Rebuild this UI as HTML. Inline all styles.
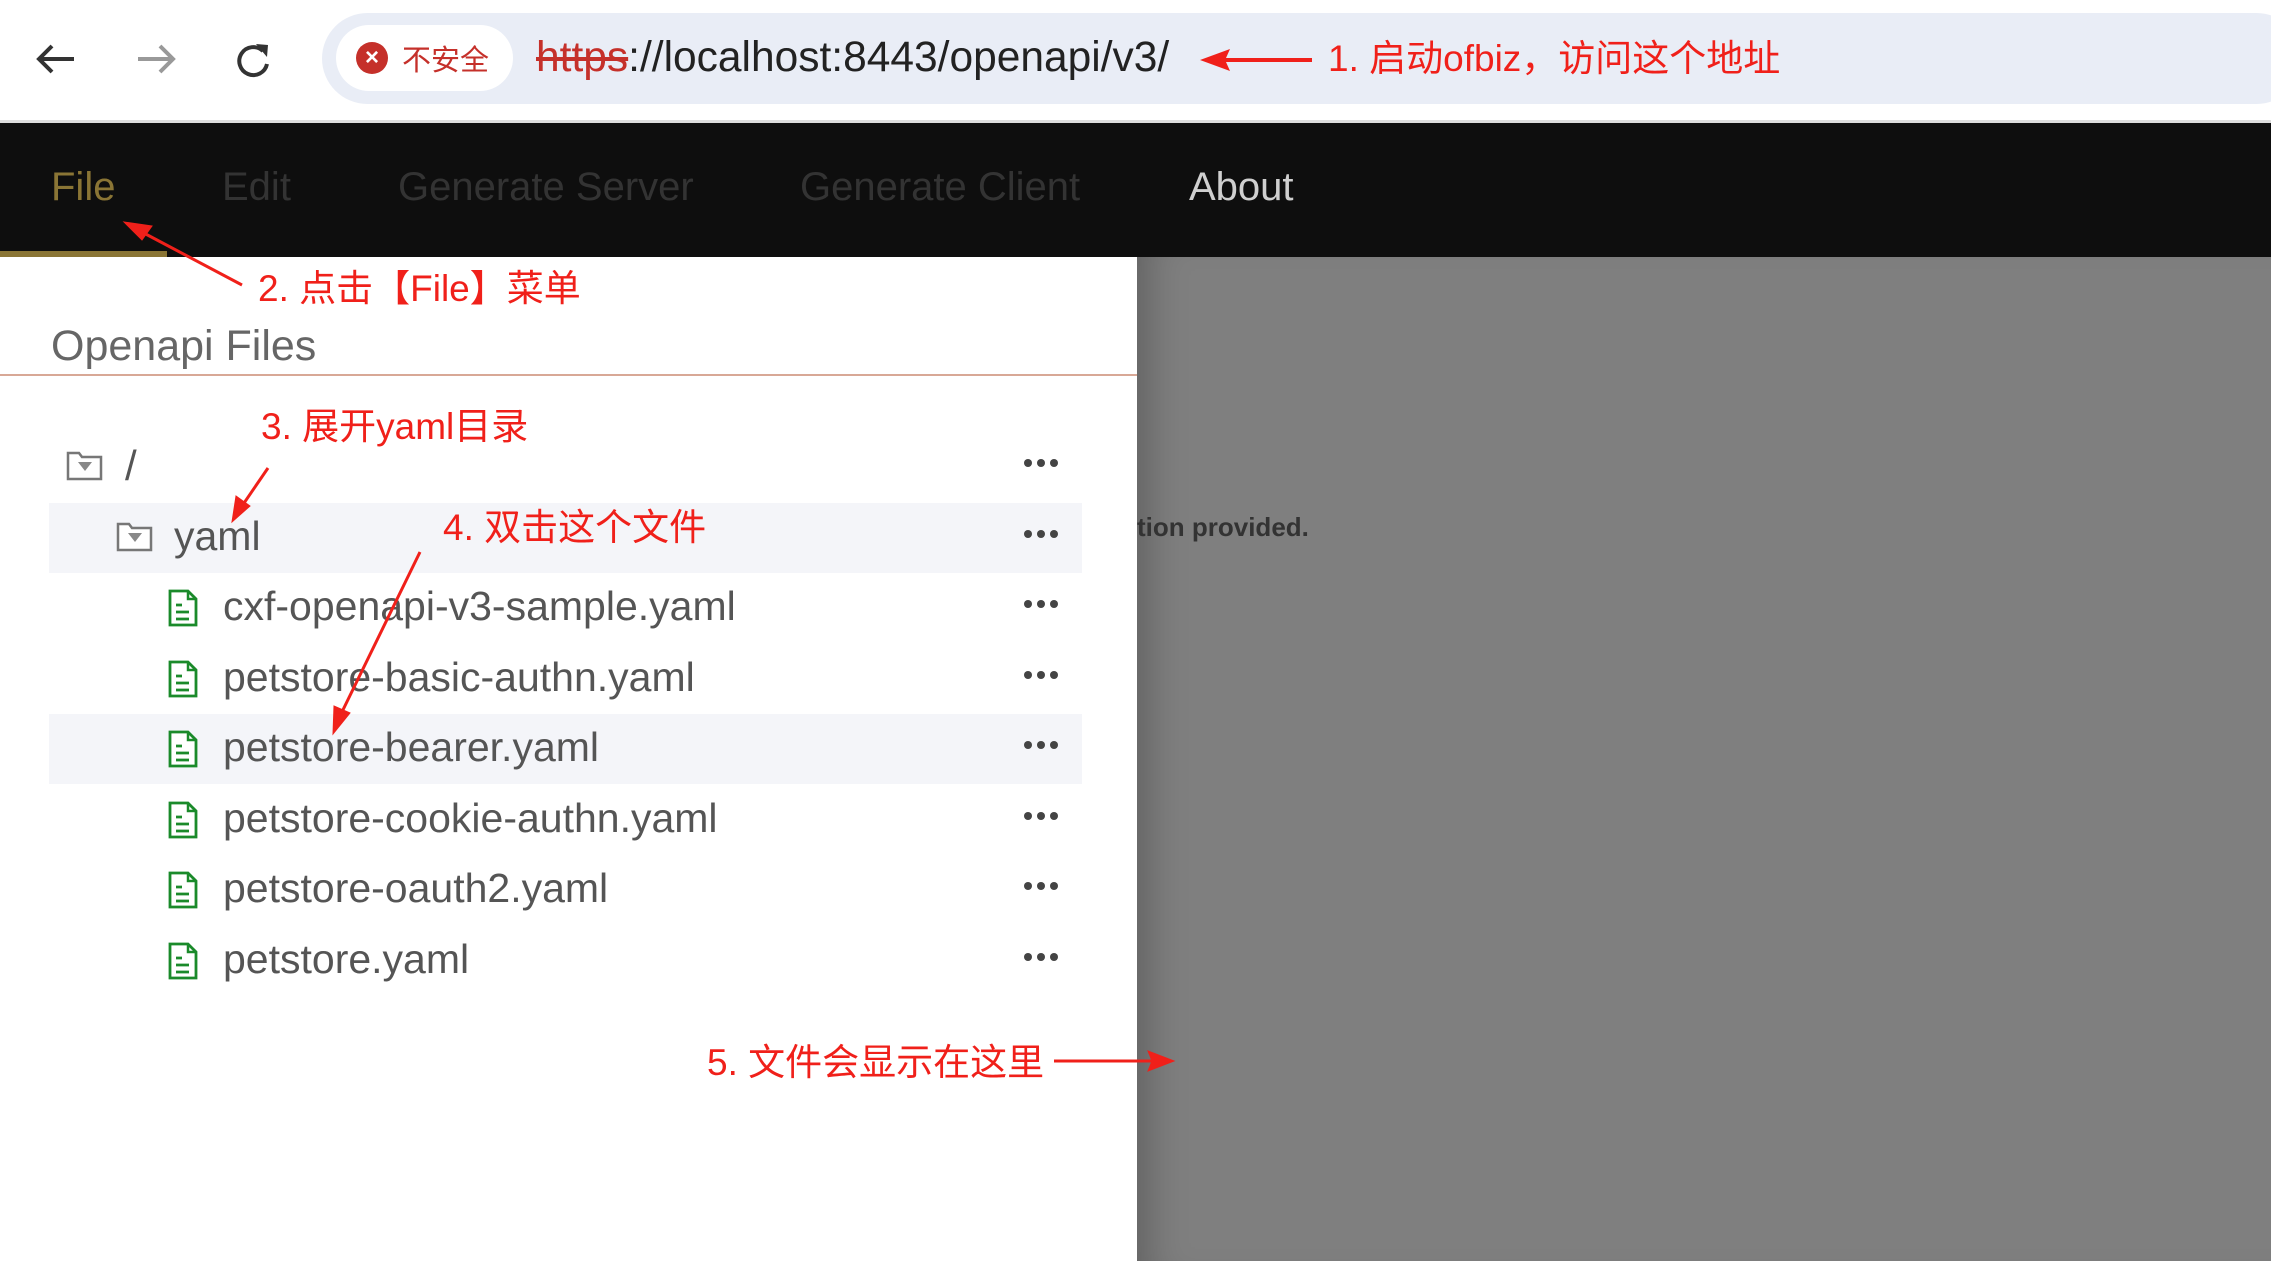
<!DOCTYPE html>
<html><head><meta charset="utf-8"><style>
*{margin:0;padding:0;box-sizing:border-box}
body{width:2271px;height:1261px;overflow:hidden;background:#fff;position:relative;font-family:"Liberation Sans","Noto Sans CJK SC",sans-serif}
.abs{position:absolute;white-space:nowrap}
.red{color:#f0201a;font-family:"Liberation Sans","Noto Sans CJK SC",sans-serif;font-size:37px;line-height:1}
.nav{font-size:40px;line-height:1;color:#333}
.row{position:absolute;left:49px;width:1033px;height:70px}
.name{position:absolute;font-size:41px;color:#555;line-height:1}
.dots{position:absolute;left:1024px;font-size:0}
.dots i{display:inline-block;width:8px;height:8px;border-radius:50%;background:#444;margin-right:5px}
</style></head><body>
<div class="abs" style="left:0;top:0;width:2271px;height:121px;background:#fff"></div>
<div class="abs" style="left:0;top:120px;width:2271px;height:3px;background:#ddd"></div>
<svg class="abs" style="left:30px;top:36px" width="260" height="46" viewBox="0 0 260 46">
<path d="M44 23H10M22 10L9 23L22 36" stroke="#333" stroke-width="4" fill="none"/>
<path d="M108 23H142M130 10L143 23L130 36" stroke="#999" stroke-width="4" fill="none"/>
<path d="M233 15A14 14 0 1 0 237 28" stroke="#333" stroke-width="4" fill="none"/>
<path d="M226 8L238 9L237 21Z" fill="#333"/>
</svg>
<div class="abs" style="left:322px;top:13px;width:1980px;height:91px;border-radius:46px;background:#e9edf6"></div>
<div class="abs" style="left:336px;top:25px;width:177px;height:66px;border-radius:33px;background:#fff"></div>
<div class="abs" style="left:356px;top:42px;width:32px;height:32px;border-radius:50%;background:#c5302a;color:#fff;font-size:24px;text-align:center;line-height:32px;font-weight:bold">×</div>
<div class="abs" style="left:402px;top:42px;font-size:29px;color:#c5302a;font-family:'Noto Sans CJK SC',sans-serif;line-height:32px">不安全</div>
<div class="abs" style="left:536px;top:33px;font-size:42.5px;color:#222;line-height:50px"><span style="color:#c5302a;text-decoration:line-through">https</span>://localhost:8443/openapi/v3/</div>
<svg class="abs" style="left:1190px;top:45px" width="130" height="30"><path d="M10 15L40 4L36 13L122 13L122 17L36 17L40 26Z" fill="#f0201a"/></svg>
<div class="abs red" style="left:1328px;top:40px">1. 启动ofbiz，访问这个地址</div>
<div class="abs" style="left:0;top:123px;width:2271px;height:134px;background:#0e0e0e"></div>
<div class="abs" style="left:0;top:251px;width:167px;height:6px;background:#8a7535"></div>
<div class="abs nav" style="left:51px;top:167px;color:#8a7535">File</div>
<div class="abs nav" style="left:222px;top:167px">Edit</div>
<div class="abs nav" style="left:398px;top:167px">Generate Server</div>
<div class="abs nav" style="left:800px;top:167px">Generate Client</div>
<div class="abs nav" style="left:1189px;top:167px;color:#cfcfcf">About</div>
<div class="abs" style="left:1137px;top:257px;width:1134px;height:1004px;background:#7f7f7f;box-shadow:inset 40px 0 40px -30px rgba(0,0,0,.25)"></div>
<div class="abs" style="left:1137px;top:512px;font-size:26px;font-weight:bold;color:#333;line-height:30px;width:200px;overflow:hidden">tion provided.</div>
<div class="abs" style="left:51px;top:322px;font-size:43px;color:#666;line-height:48px">Openapi Files</div>
<div class="abs" style="left:0;top:374px;width:1137px;height:2px;background:#d8a896"></div>
<div class="row" style="top:503px;background:#f4f5f9"></div>
<div class="row" style="top:714px;background:#f4f5f9"></div>
<svg class="abs" style="left:0;top:0" width="1137" height="1261">
<defs>
<g id="fo"><path d="M1 3H12L15 7H34V29H1Z" fill="#fff" stroke="#777" stroke-width="2.5"/><path d="M11 12H25L18 21Z" fill="#888"/></g>
<g id="fi"><path d="M2 1H20L28 9V35H2Z" fill="#fff" stroke="#1a8a2a" stroke-width="2.8"/><path d="M20 1V9H28" fill="none" stroke="#1a8a2a" stroke-width="2.5"/><path d="M8 15H14M8 22H21M8 29H21" stroke="#1a8a2a" stroke-width="2.8"/></g>
</defs>
<use href="#fo" x="67" y="450"/>
<use href="#fo" x="117" y="521"/>
<use href="#fi" x="168" y="590"/>
<use href="#fi" x="168" y="661"/>
<use href="#fi" x="168" y="731"/>
<use href="#fi" x="168" y="802"/>
<use href="#fi" x="168" y="872"/>
<use href="#fi" x="168" y="943"/>
</svg>
<div class="name" style="left:125px;top:445px;font-size:42px">/</div>
<div class="name" style="left:174px;top:516px">yaml</div>
<div class="name" style="left:223px;top:586px">cxf-openapi-v3-sample.yaml</div>
<div class="name" style="left:223px;top:657px">petstore-basic-authn.yaml</div>
<div class="name" style="left:223px;top:727px">petstore-bearer.yaml</div>
<div class="name" style="left:223px;top:798px">petstore-cookie-authn.yaml</div>
<div class="name" style="left:223px;top:868px">petstore-oauth2.yaml</div>
<div class="name" style="left:223px;top:939px">petstore.yaml</div>
<div class="dots" style="top:459px"><i></i><i></i><i></i></div>
<div class="dots" style="top:530px"><i></i><i></i><i></i></div>
<div class="dots" style="top:600px"><i></i><i></i><i></i></div>
<div class="dots" style="top:671px"><i></i><i></i><i></i></div>
<div class="dots" style="top:741px"><i></i><i></i><i></i></div>
<div class="dots" style="top:812px"><i></i><i></i><i></i></div>
<div class="dots" style="top:882px"><i></i><i></i><i></i></div>
<div class="dots" style="top:953px"><i></i><i></i><i></i></div>
<div class="abs red" style="left:258px;top:270px">2. 点击【File】菜单</div>
<div class="abs red" style="left:261px;top:408px">3. 展开yaml目录</div>
<div class="abs red" style="left:443px;top:509px">4. 双击这个文件</div>
<div class="abs red" style="left:707px;top:1044px">5. 文件会显示在这里</div>
<svg class="abs" style="left:0;top:0;pointer-events:none" width="2271" height="1261">
<g fill="#f0201a" stroke="#f0201a">
<line x1="242" y1="285" x2="140" y2="231" stroke-width="3"/><path d="M124 222L152 226L142 240Z"/>
<line x1="268" y1="468" x2="242" y2="506" stroke-width="3"/><path d="M232 522L236 496L250 506Z"/>
<line x1="420" y1="552" x2="340" y2="716" stroke-width="3"/><path d="M333 734L334 706L350 713Z"/>
<line x1="1054" y1="1061" x2="1155" y2="1061" stroke-width="3"/><path d="M1174 1061L1148 1051L1152 1061L1148 1071Z"/>
</g></svg>
</body></html>
